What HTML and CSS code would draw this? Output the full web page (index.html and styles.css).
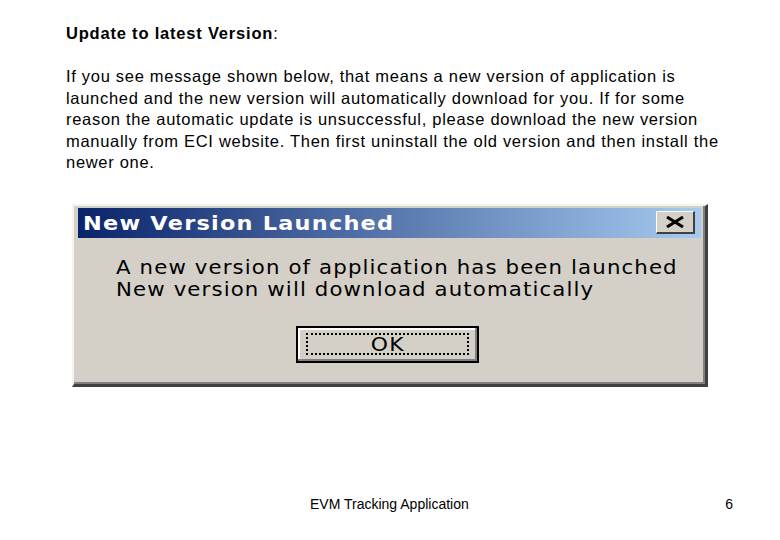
FILE: index.html
```html
<!DOCTYPE html>
<html>
<head>
<meta charset="utf-8">
<link rel="stylesheet" href="styles.css">
</head>
<body>
<div class="slide">
  <div class="content">
    <p class="heading"><b>Update to latest Version</b>:</p>
    <p class="para">If you see message shown below, that means a new version of application is<br>launched and the new version will automatically download for you. If for some<br>reason the automatic update is unsuccessful, please download the new version<br>manually from ECI website. Then first uninstall the old version and then install the<br>newer one.</p>
  </div>
  <div class="dialog">
    <div class="titlebar">
      <span class="title">New Version Launched</span>
      <span class="close"><svg width="22" height="12" viewBox="0 0 22 12"><path d="M3 1 L19 11 M3 11 L19 1" stroke="#000" stroke-width="3" fill="none"/></svg></span>
    </div>
    <div class="body">
      <div class="msg">A new version of application has been launched<br>New version will download automatically</div>
      <div class="btnrow"><div class="btn"><span class="focus"><span class="oktext">OK</span></span></div></div>
    </div>
  </div>
  <div class="footer">
    <span class="ftitle">EVM Tracking Application</span>
    <span class="pnum">6</span>
  </div>
</div>
</body>
</html>
```
FILE: styles.css
```css
html, body { margin: 0; padding: 0; background: #fff; }
.slide {
  width: 780px; height: 540px; box-sizing: border-box;
  display: flex; flex-direction: column;
  font-family: "Liberation Sans", Arial, sans-serif; color: #000;
}
.content { padding: 23px 20px 0 66px; }
.heading { margin: 0; font-size: 16.5px; line-height: 20px; letter-spacing: 0.8px; white-space: nowrap; }
.para { margin: 23px 0 0 0; font-size: 16.5px; line-height: 21.5px; letter-spacing: 0.7px; white-space: nowrap; }
.dialog {
  margin: 30px auto 0 72px; width: 636px; height: 183px; box-sizing: border-box;
  background: #d4d0c8;
  border-top: 2px solid #f4f3ef; border-left: 2px solid #f4f3ef;
  border-right: 3px solid #404040; border-bottom: 3px solid #404040;
  box-shadow: inset -2px -2px 0 #808080;
  padding: 2px 4px 0 4px;
  display: flex; flex-direction: column;
}
.titlebar {
  height: 30px; background: linear-gradient(to right, #0a246a, #a6caf0);
  display: flex; align-items: center; justify-content: space-between;
  padding: 0 6px 0 5px;
}
.title {
  color: #fff; font-family: "DejaVu Sans", Verdana, sans-serif; font-weight: bold;
  font-size: 20px; letter-spacing: 1.1px;
  transform: scaleX(1.12); transform-origin: left center;
}
.close {
  width: 39px; height: 23px; box-sizing: border-box; background: #d4d0c8;
  border-top: 1px solid #fff; border-left: 1px solid #fff;
  border-right: 2px solid #404040; border-bottom: 2px solid #404040;
  display: flex; align-items: center; justify-content: center;
}
.body { padding: 18px 0 0 38px; }
.msg {
  font-family: "DejaVu Sans", Verdana, sans-serif; font-size: 19px; line-height: 22px;
  letter-spacing: 1px; white-space: nowrap;
  transform: scaleX(1.12); transform-origin: left center;
}
.btnrow { padding: 26px 0 0 180px; }
.btn {
  width: 183px; height: 37px; box-sizing: border-box;
  border: 2px solid #000; background: #d4d0c8;
  box-shadow: inset -2px -2px 0 #808080, inset 2px 2px 0 #fff;
  padding: 5px 8px 6px 8px; display: flex;
}
.focus {
  flex: 1; border: 2px dotted #000; display: flex; align-items: center; justify-content: center;
  font-family: "DejaVu Sans", Verdana, sans-serif; font-size: 19px; letter-spacing: 1px;
}
.oktext { display: inline-block; transform: scaleX(1.15); }
.footer {
  margin-top: auto; padding: 0 47px 28px 310px;
  display: flex; justify-content: space-between; font-size: 14px;
}
```
